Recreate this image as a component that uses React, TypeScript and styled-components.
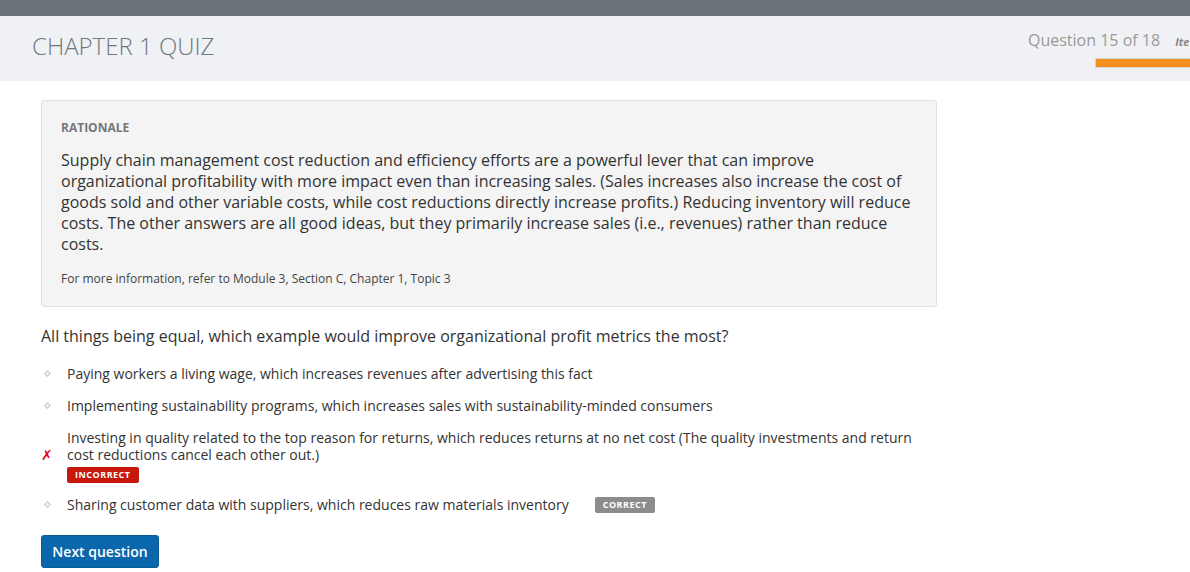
import React from "react";
import styled, { createGlobalStyle } from "styled-components";

const Global = createGlobalStyle`
  html, body { margin: 0; padding: 0; background: #fff; overflow: hidden; }
  body { font-family: "Open Sans", "Liberation Sans", sans-serif; color: #333; }
  * { box-sizing: border-box; }
`;

const TopBar = styled.div`
  height: 16px;
  background: #6b737b;
`;

const Header = styled.header`
  height: 65px;
  background: #f0f1f5;
  display: flex;
  align-items: flex-start;
  overflow: hidden;
`;

const Title = styled.h1`
  flex: 1;
  margin: 0;
  padding: 14px 0 0 32px;
  font-size: 24px;
  font-weight: 300;
  line-height: 32px;
  color: #6f7780;
  letter-spacing: 0;
`;

const Progress = styled.div`
  width: 162px;
  flex-shrink: 0;
  overflow: hidden;
  display: flex;
  flex-direction: column;
  padding-top: 13px;
`;

const ProgressRow = styled.div`
  display: flex;
  align-items: baseline;
  white-space: nowrap;
  height: 22px;
`;

const Count = styled.span`
  font-size: 16px;
  line-height: 22px;
  color: #9a9a9a;
`;

const ItemLabel = styled.span`
  margin-left: 15px;
  font-size: 11px;
  font-weight: 700;
  font-style: italic;
  color: #888;
`;

const Bar = styled.div`
  margin: 7px 0 0 67px;
  height: 10px;
  width: 120px;
  background: #f39020;
  border: 1px solid #d5d5d5;
  border-right: none;
`;

const Main = styled.main`
  padding: 19px 0 0 41px;
  width: 937px;
`;

const Rationale = styled.section`
  background: #f4f4f4;
  border: 1px solid #e1e1e1;
  border-radius: 3px;
  padding: 19px;
`;

const RationaleLabel = styled.div`
  font-size: 12px;
  font-weight: 700;
  line-height: 16px;
  color: #777;
  text-transform: uppercase;
`;

const RationaleText = styled.p`
  margin: 14px 0 0;
  font-size: 16px;
  line-height: 21px;
  color: #333;
  padding-right: 6px;
`;

const MoreInfo = styled.p`
  margin: 16px 0 0;
  font-size: 12px;
  line-height: 16px;
  color: #444;
`;

const Question = styled.p`
  margin: 18px 0 0;
  font-size: 16px;
  line-height: 22px;
  color: #333;
`;

const Options = styled.ul`
  list-style: none;
  margin: 18px 0 0;
  padding: 0;
  display: flex;
  flex-direction: column;
  gap: 15px;
`;

const Option = styled.li`
  display: flex;
  align-items: center;
`;

const Marker = styled.span`
  width: 26px;
  flex-shrink: 0;
  display: flex;
  align-items: center;
  padding-left: 4px;
`;

const Diamond = styled.span`
  display: block;
  width: 5px;
  height: 5px;
  border: 1px solid #c8c8c8;
  background: #f4f4f4;
  transform: rotate(45deg);
`;

const Cross = styled.span`
  font-family: "DejaVu Sans", sans-serif;
  font-size: 14px;
  font-weight: 700;
  line-height: 16px;
  color: #e8001c;
  margin-left: -4px;
`;

const OptionBody = styled.div`
  display: flex;
  flex-direction: column;
  align-items: flex-start;
`;

const OptionInline = styled.div`
  display: flex;
  align-items: center;
`;

const OptionText = styled.span`
  font-size: 14px;
  line-height: 17px;
  color: #333;
`;

const Badge = styled.span<{ $tone: "bad" | "good" }>`
  display: inline-block;
  font-size: 9px;
  font-weight: 700;
  letter-spacing: 0.5px;
  line-height: 16px;
  height: 16px;
  padding: 0 8px;
  border-radius: 2px;
  color: #fff;
  background: ${(p) => (p.$tone === "bad" ? "#c5170b" : "#8c8c8c")};
`;

const BadgeBelow = styled.div`
  margin: 4px 0 -2px;
  display: flex;
`;

const BadgeSide = styled.div`
  margin-left: 26px;
  display: flex;
`;

const NextButton = styled.button`
  margin-top: 22px;
  height: 33px;
  width: 118px;
  border: 1px solid #0a5c96;
  border-radius: 3px;
  background: #0a67ab;
  color: #fff;
  font-family: "Open Sans", "Liberation Sans", sans-serif;
  font-size: 14px;
  font-weight: 600;
  padding: 0;
  cursor: pointer;
`;

export default function App() {
  return (
    <>
      <Global />
      <TopBar />
      <Header>
        <Title>CHAPTER 1 QUIZ</Title>
        <Progress>
          <ProgressRow>
            <Count>Question 15 of 18</Count>
            <ItemLabel>Ite</ItemLabel>
          </ProgressRow>
          <Bar />
        </Progress>
      </Header>
      <Main>
        <Rationale>
          <RationaleLabel>Rationale</RationaleLabel>
          <RationaleText>
            Supply chain management cost reduction and efficiency efforts are a powerful lever that can improve
            organizational profitability with more impact even than increasing sales. (Sales increases also increase the
            cost of goods sold and other variable costs, while cost reductions directly increase profits.) Reducing
            inventory will reduce costs. The other answers are all good ideas, but they primarily increase sales (i.e.,
            revenues) rather than reduce costs.
          </RationaleText>
          <MoreInfo>For more information, refer to Module 3, Section C, Chapter 1, Topic 3</MoreInfo>
        </Rationale>
        <Question>All things being equal, which example would improve organizational profit metrics the most?</Question>
        <Options>
          <Option>
            <Marker>
              <Diamond />
            </Marker>
            <OptionText>Paying workers a living wage, which increases revenues after advertising this fact</OptionText>
          </Option>
          <Option>
            <Marker>
              <Diamond />
            </Marker>
            <OptionText>
              Implementing sustainability programs, which increases sales with sustainability-minded consumers
            </OptionText>
          </Option>
          <Option>
            <Marker>
              <Cross>✗</Cross>
            </Marker>
            <OptionBody>
              <OptionText>
                Investing in quality related to the top reason for returns, which reduces returns at no net cost (The
                quality investments and return cost reductions cancel each other out.)
              </OptionText>
              <BadgeBelow>
                <Badge $tone="bad">INCORRECT</Badge>
              </BadgeBelow>
            </OptionBody>
          </Option>
          <Option>
            <Marker>
              <Diamond />
            </Marker>
            <OptionInline>
              <OptionText>Sharing customer data with suppliers, which reduces raw materials inventory</OptionText>
              <BadgeSide>
                <Badge $tone="good">CORRECT</Badge>
              </BadgeSide>
            </OptionInline>
          </Option>
        </Options>
        <NextButton>Next question</NextButton>
      </Main>
    </>
  );
}
